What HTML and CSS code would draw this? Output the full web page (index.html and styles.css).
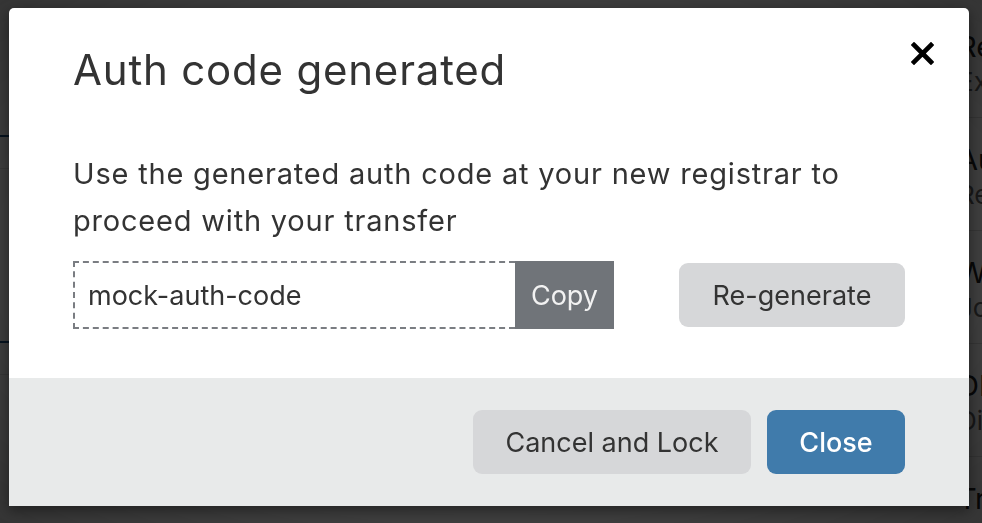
FILE: index.html
```html
<!DOCTYPE html>
<html lang="en">
<head>
<meta charset="utf-8">
<title>Auth code generated</title>
<link rel="stylesheet" href="styles.css">
</head>
<body>
<div class="page">
  <div class="main">
    <div class="rule rule-strong r1"></div>
    <div class="rule rule-faint r2"></div>
    <div class="rule rule-strong r3"></div>
    <div class="rule rule-faint r4"></div>
  </div>
  <ul class="side-list">
    <li><span class="item-title">Registrar</span><span class="item-sub">Expires</span></li>
    <li><span class="item-title">Auth</span><span class="item-sub">Renew</span></li>
    <li><span class="item-title">WHOIS</span><span class="item-sub">John</span></li>
    <li><span class="item-title">DNS</span><span class="item-sub">Disabled</span></li>
    <li><span class="item-title">Transfer</span><span class="item-sub">Off</span></li>
  </ul>
</div>
<div class="overlay"></div>
<div class="modal" role="dialog">
  <div class="modal-body">
    <div class="modal-head">
      <h1 class="modal-title">Auth code generated</h1>
      <button class="close-x" aria-label="Close">
        <svg width="23" height="23" viewBox="0 0 23 23"><path d="M3 3 L20 20 M20 3 L3 20" stroke="#000" stroke-width="4.6" stroke-linecap="square" fill="none"/></svg>
      </button>
    </div>
    <p class="modal-text">Use the generated auth code at your new registrar to proceed with your transfer</p>
    <div class="code-row">
      <div class="code-field">
        <span class="code-value">mock-auth-code</span>
        <button class="copy-btn">Copy</button>
      </div>
      <button class="btn btn-grey regen">Re-generate</button>
    </div>
  </div>
  <div class="modal-foot">
    <button class="btn btn-grey">Cancel and Lock</button>
    <button class="btn btn-blue">Close</button>
  </div>
</div>
</body>
</html>
```
FILE: styles.css
```css
* { box-sizing: border-box; }
html, body { margin: 0; padding: 0; }
body {
  width: 982px;
  height: 523px;
  overflow: hidden;
  background: #ffffff;
  font-family: "Inter", "Noto Sans", sans-serif;
  color: #333;
}
.page {
  display: grid;
  grid-template-columns: 958px 1fr;
  height: 523px;
}
.main { position: relative; }
.rule { position: absolute; left: 0; right: 0; }
.rule-strong { height: 2px; background: #1b4f80; }
.rule-faint { height: 1px; background: #e6e6e6; }
.r1 { top: 135px; }
.r2 { top: 168px; }
.r3 { top: 341px; }
.r4 { top: 374px; }

.side-list {
  list-style: none;
  margin: 0;
  padding: 5px 0 0 0;
  white-space: nowrap;
  overflow: hidden;
}
.side-list li {
  display: flex;
  flex-direction: column;
  height: 113px;
  padding-top: 24px;
  border-bottom: 1px solid #ddd;
}
.item-title { font-size: 29px; line-height: 36px; color: #222; }
.item-sub { font-size: 26px; line-height: 34px; color: #666; }

.overlay {
  position: fixed;
  inset: 0;
  background:
    radial-gradient(ellipse at 50% 50%, rgba(0,0,0,0) 40%, rgba(0,0,0,0.25) 100%),
    rgba(0,0,0,0.72);
}

.modal {
  position: absolute;
  left: 9px;
  top: 8px;
  width: 960px;
  height: 498px;
  background: #fff;
  border-radius: 5px 5px 0 0;
  box-shadow: 0 4px 14px rgba(0,0,0,0.45);
  display: flex;
  flex-direction: column;
  overflow: hidden;
}
.modal-body {
  flex: 1;
  padding: 37px 35px 0 64px;
}
.modal-head {
  display: flex;
  justify-content: space-between;
  align-items: flex-start;
}
.modal-title {
  margin: 0;
  font-size: 42px;
  line-height: 50px;
  font-weight: 400;
  color: #333;
  letter-spacing: 0.8px;
}
.close-x {
  border: 0;
  background: none;
  padding: 0;
  margin-top: -3px;
  width: 23px;
  height: 23px;
  display: block;
}
.close-x svg { display: block; }
.modal-text {
  margin: 55px 0 0 0;
  width: 820px;
  font-size: 29px;
  line-height: 47px;
  letter-spacing: 0.8px;
  color: #333;
}
.code-row {
  display: flex;
  align-items: center;
  margin-top: 17px;
  width: 832px;
}
.code-field {
  display: flex;
  height: 68px;
  width: 541px;
}
.code-value {
  flex: 1;
  display: flex;
  align-items: center;
  padding-left: 13px;
  border: 2px dashed #7a7d82;
  border-right: 0;
  font-size: 27px;
  color: #333;
}
.copy-btn {
  width: 99px;
  border: 0;
  background: #707479;
  color: #f2f2f2;
  font-family: inherit;
  font-size: 27px;
  padding: 0;
}
.btn {
  height: 64px;
  border: 0;
  border-radius: 9px;
  font-family: inherit;
  font-size: 27px;
  padding: 0;
}
.btn-grey { background: #d6d7d9; color: #333; }
.btn-blue { background: #407bab; color: #fff; font-weight: 500; width: 138px; }
.regen { margin-left: 65px; width: 226px; }
.modal-foot {
  height: 128px;
  background: #e8eaea;
  display: flex;
  justify-content: flex-end;
  align-items: flex-start;
  gap: 16px;
  padding: 32px 64px 0 0;
}
.modal-foot .btn-grey { width: 278px; }
```
